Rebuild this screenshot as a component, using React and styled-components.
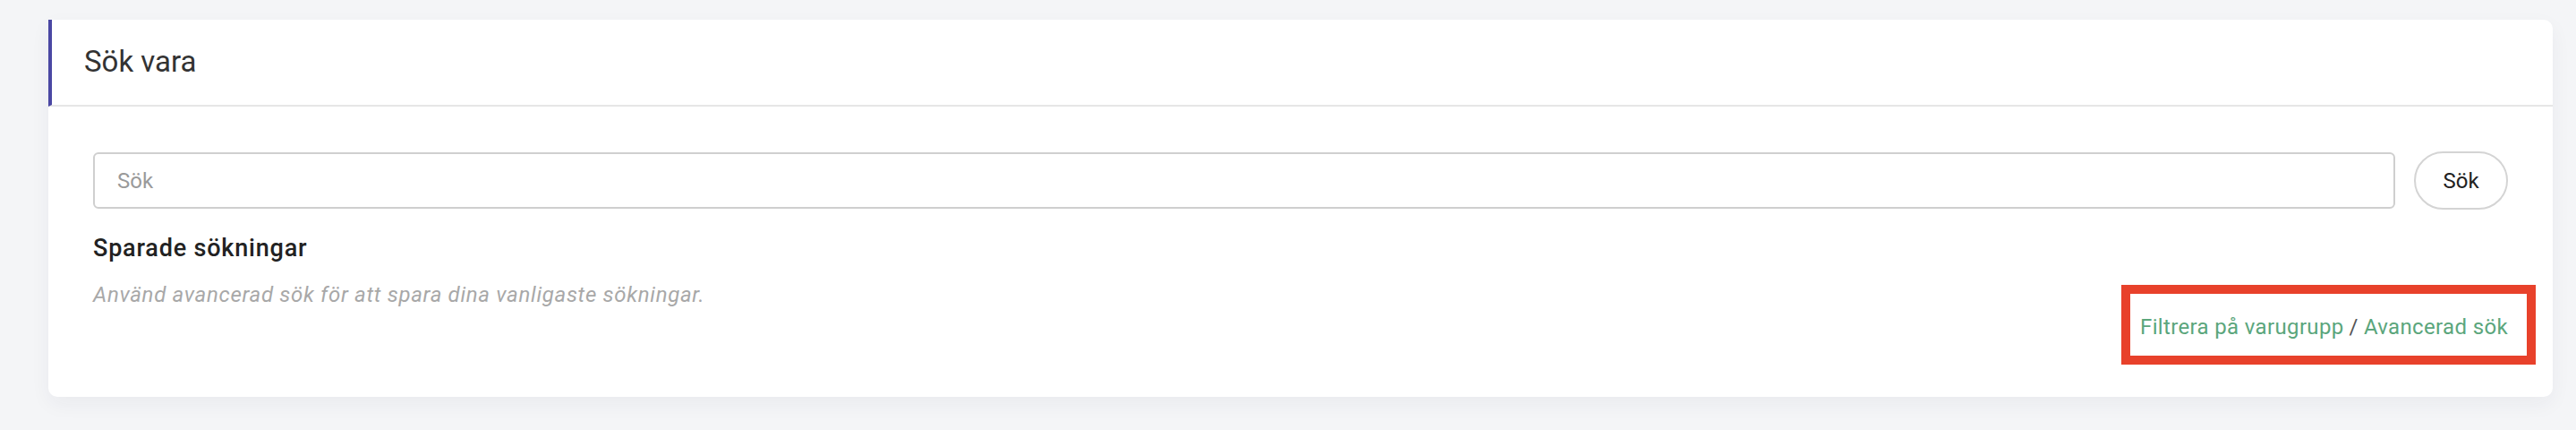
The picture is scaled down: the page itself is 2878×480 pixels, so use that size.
import React from "react";
import styled, { createGlobalStyle } from "styled-components";

const GlobalStyle = createGlobalStyle`
  html, body {
    margin: 0;
    padding: 0;
    background: #f4f5f7;
    font-family: Roboto, "Liberation Sans", Arial, sans-serif;
  }
  * { box-sizing: border-box; }
`;

const Page = styled.div`
  padding: 22px 26px 37px 54px;
`;

const Card = styled.section`
  background: #ffffff;
  border-radius: 0 10px 10px 10px;
  box-shadow: 0 8px 22px rgba(30, 40, 70, 0.05);
`;

const CardHeader = styled.header`
  height: 97px;
  display: flex;
  align-items: center;
  padding: 0 0 2px 36px;
  border-left: 4px solid #4a47a3;
  border-bottom: 2px solid #e6e6e6;
`;

const Title = styled.h2`
  margin: 0;
  font-size: 33px;
  font-weight: 400;
  color: #333333;
  line-height: 40px;
`;

const CardBody = styled.div`
  padding: 50px 50px 63px 50px;
`;

const SearchRow = styled.div`
  display: flex;
  align-items: center;
  gap: 21px;
`;

const SearchInput = styled.input`
  flex: 1;
  height: 63px;
  border: 2px solid #cfcfcf;
  border-radius: 6px;
  padding: 0 25px;
  font-family: inherit;
  font-size: 24px;
  color: #333;
  outline: none;
  background: #fff;
  &::placeholder {
    color: #9a9a9a;
  }
`;

const PillButton = styled.button`
  width: 105px;
  height: 65px;
  border-radius: 33px;
  border: 2px solid #d4d4d4;
  background: #ffffff;
  font-family: inherit;
  font-size: 24px;
  color: #222222;
  cursor: pointer;
  padding: 0;
`;

const SectionTitle = styled.h3`
  margin: 27px 0 0;
  font-size: 27px;
  font-weight: 500;
  letter-spacing: 0.8px;
  line-height: 32px;
  color: #222222;
`;

const Hint = styled.p`
  margin: 21px 0 0;
  font-size: 24px;
  font-style: italic;
  letter-spacing: 0.7px;
  line-height: 30px;
  color: #a8a8a8;
`;

const LinksRow = styled.div`
  margin-top: 6px;
  display: flex;
  justify-content: flex-end;
  font-size: 24px;
  letter-spacing: 0.35px;
  line-height: 30px;
`;

const LinkGroup = styled.span`
  position: relative;
  display: inline-block;
`;

const Link = styled.a`
  color: #5ba67c;
  text-decoration: none;
  cursor: pointer;
`;

const Divider = styled.span`
  color: #555555;
  margin: 0 6px;
`;

const Highlight = styled.span`
  position: absolute;
  top: -32px;
  bottom: -27px;
  left: -21px;
  right: -31px;
  border: 10px solid #e8412b;
  pointer-events: none;
`;

export default function App() {
  return (
    <>
      <GlobalStyle />
      <Page>
        <Card>
          <CardHeader>
            <Title>Sök vara</Title>
          </CardHeader>
          <CardBody>
            <SearchRow>
              <SearchInput placeholder="Sök" />
              <PillButton>Sök</PillButton>
            </SearchRow>
            <SectionTitle>Sparade sökningar</SectionTitle>
            <Hint>Använd avancerad sök för att spara dina vanligaste sökningar.</Hint>
            <LinksRow>
              <LinkGroup>
                <Link>Filtrera på varugrupp</Link>
                <Divider>/</Divider>
                <Link>Avancerad sök</Link>
                <Highlight />
              </LinkGroup>
            </LinksRow>
          </CardBody>
        </Card>
      </Page>
    </>
  );
}
